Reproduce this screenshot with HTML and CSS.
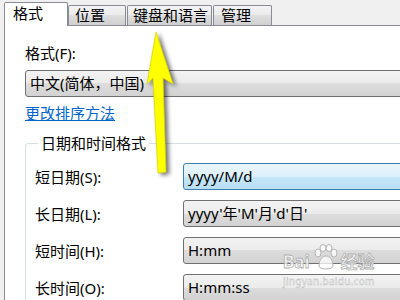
FILE: index.html
```html
<!DOCTYPE html>
<html lang="zh-CN">
<head>
    <meta charset="UTF-8">
    <title>区域和语言</title>
    <link rel="stylesheet" href="styles.css">
</head>
<body>
    <div class="window">
        <div class="tabs">
            <div class="tab active">格式</div>
            <div class="tab tab-pos">位置</div>
            <div class="tab tab-kbd">键盘和语言</div>
            <div class="tab tab-mgr">管理</div>
        </div>
        <div class="panel">
            <div class="field-label">格式(F):</div>
            <div class="combo wide">中文(简体，中国)</div>
            <a class="link" href="#">更改排序方法</a>
            <fieldset class="group">
                <legend>日期和时间格式</legend>
                <div class="row">
                    <label>短日期(S):</label>
                    <div class="combo focus">yyyy/M/d</div>
                </div>
                <div class="row">
                    <label>长日期(L):</label>
                    <div class="combo">yyyy'年'M'月'd'日'</div>
                </div>
                <div class="row">
                    <label>短时间(H):</label>
                    <div class="combo">H:mm</div>
                </div>
                <div class="row">
                    <label>长时间(O):</label>
                    <div class="combo">H:mm:ss</div>
                </div>
            </fieldset>
        </div>
    </div>

    <!-- 黄色箭头 -->
    <svg class="arrow" width="400" height="300" viewBox="0 0 400 300">
        <polygon points="156,32 173,84 163,78 166,172 158,173 153,78 147,84" fill="#ffff00" stroke="#d8d800" stroke-width="0.8"/>
    </svg>

    <!-- 水印 -->
    <div class="watermark">
        <div class="wm-top">
            <span class="wm-bai">Bai</span>
            <svg class="wm-paw" width="27" height="27" viewBox="0 0 27 27">
                <g fill="rgba(255,255,255,0.75)" stroke="#b4b4b4" stroke-width="1">
                    <ellipse cx="6" cy="9" rx="3" ry="4"/>
                    <ellipse cx="11" cy="4" rx="3" ry="3.5"/>
                    <ellipse cx="17" cy="4" rx="3" ry="3.5"/>
                    <ellipse cx="22" cy="9" rx="3" ry="4"/>
                    <path d="M7 22 C7 15 11 12 14 12 C17 12 21 15 21 22 C21 26 7 26 7 22 Z"/>
                </g>
            </svg>
            <span class="wm-jy">经验</span>
        </div>
        <div class="wm-url">jingyan.baidu.com</div>
    </div>
</body>
</html>
```

FILE: styles.css
```css
html, body { margin: 0; padding: 0; }
body { width: 400px; height: 300px; overflow: hidden; background: #f0f0f0; font-family: 'Noto Sans', 'Noto Sans CJK SC', sans-serif; font-size: 15px; color: #000; position: relative; }

.window { width: 400px; height: 300px; display: flex; flex-direction: column; }

/* 标签页 */
.tabs { display: flex; align-items: flex-end; height: 25px; padding-left: 4px; flex-shrink: 0; }
.tab {
    height: 20px;
    box-sizing: border-box;
    border: 1px solid #898c95;
    border-bottom: none;
    border-radius: 2px 2px 0 0;
    background: linear-gradient(#f3f3f3 0%, #ebebeb 50%, #dedede 50%, #d0d0d0 100%);
    line-height: 19px;
    padding-left: 6px;
    white-space: nowrap;
}
.tab.active { height: 24px; width: 64px; margin-bottom: -1px; background: #fff; padding-left: 8px; line-height: 21px; position: relative; z-index: 1; }
.tab-pos { width: 58px; }
.tab-kbd { width: 85px; margin-left: 1px; padding-left: 5px; }
.tab-mgr { width: 59px; margin-left: 1px; padding-left: 7px; }

.panel {
    flex: 1;
    margin-left: 4px;
    background: #fff;
    border-top: 1px solid #898c95;
    border-left: 1px solid #898c95;
    padding: 17px 0 0 20px;
    overflow: hidden;
}

.field-label { line-height: 20px; height: 20px; }

.combo {
    height: 27px;
    box-sizing: border-box;
    border: 1px solid #707070;
    border-radius: 3px;
    background: linear-gradient(#f3f3f3 0%, #ebebeb 50%, #dddddd 50%, #d2d2d2 100%);
    line-height: 24px;
    padding-left: 4px;
    white-space: nowrap;
}
.combo.wide { width: 420px; margin-top: 7px; }
.combo.focus { border-color: #3c7fb1; background: linear-gradient(#eaf6fd 0%, #dcf0fc 50%, #c6e6f8 50%, #b8def5 100%); }

.link { display: block; width: max-content; margin-top: 6px; line-height: 20px; color: #0066cc; text-decoration: underline; }

/* 分组框 */
.group {
    margin: 10px 0 0 0;
    width: 420px;
    border: 1px solid #d5dfe5;
    border-radius: 3px;
    padding: 0 0 0 9px;
    min-width: 0;
}
.group legend { padding: 0 3px; margin-left: 3px; line-height: 20px; }

.row { display: grid; grid-template-columns: 148px 1fr; align-items: center; margin-top: 10px; }
.row label { line-height: 20px; }

/* 箭头 */
.arrow { position: absolute; left: 0; top: 0; filter: drop-shadow(3px 2px 2px rgba(0,0,0,0.55)); pointer-events: none; }

/* 水印 */
.watermark { position: absolute; left: 283px; top: 244px; color: rgba(255,255,255,0.8); pointer-events: none; }
.wm-top { display: flex; align-items: flex-end; gap: 2px; }
.wm-bai, .wm-jy { font-size: 17px; font-weight: bold; line-height: 18px; -webkit-text-stroke: 0.8px #b0b0b0; }
.wm-url { font-size: 10px; line-height: 12px; margin-top: 4px; -webkit-text-stroke: 0.4px #b8b8b8; letter-spacing: 0.3px; }
```
